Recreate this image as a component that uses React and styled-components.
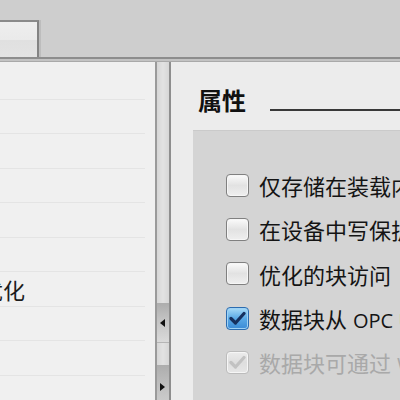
import React from "react";
import styled, { createGlobalStyle } from "styled-components";

const GlobalStyle = createGlobalStyle`
  html, body {
    margin: 0;
    padding: 0;
    width: 400px;
    height: 400px;
    overflow: hidden;
    background: #cecece;
  }
  * {
    box-sizing: border-box;
  }
`;

const Window = styled.div`
  width: 400px;
  height: 400px;
  display: flex;
  flex-direction: column;
  overflow: hidden;
  font-family: "Noto Sans CJK SC", "Noto Sans", sans-serif;
`;

const TabBar = styled.div`
  height: 57px;
  flex: none;
  background: #cecece;
  padding-top: 20px;
  display: flex;
`;

const Tab = styled.div`
  width: 39px;
  height: 37px;
  border-right: 2px solid #838383;
  border-top: 2px solid #8a8a8a;
  box-shadow: 2px 0 0 #bdbdbd;
  background: linear-gradient(#eeeeee 0, #eaeaea 50%, #e0e0e0 52%, #e3e3e3 100%);
`;

const Divider = styled.div`
  height: 5px;
  flex: none;
  border-top: 2px solid #8d8d8d;
  background: #c3c3c3;
  border-bottom: 1px solid #a9a9a9;
`;

const Body = styled.div`
  flex: 1;
  display: flex;
  min-height: 0;
`;

const TreePanel = styled.div`
  width: 155px;
  flex: none;
  background: #f0f0f0;
  padding: 3px 10px 0 0;
  overflow: hidden;
`;

const TreeRow = styled.div`
  height: 34.5px;
  border-bottom: 1px solid #e4e4e4;
  display: flex;
  align-items: center;
  font-size: 22px;
  color: #1c1c1c;
  white-space: nowrap;
`;

const TreeLabel = styled.span`
  margin-left: ${(p) => p.$offset}px;
  line-height: 1;
`;

const Splitter = styled.div`
  width: 16px;
  flex: none;
  display: flex;
  flex-direction: column;
  border-left: 2px solid #9a9a9a;
  border-right: 2px solid #8e8e8e;
  background: #d9d9d9;
`;

const Track = styled.div`
  height: ${(p) => p.$h}px;
  flex: none;
  background: linear-gradient(90deg, #d6d6d6, #e2e2e2 50%, #d6d6d6);
`;

const ArrowButton = styled.div`
  height: ${(p) => p.$h}px;
  flex: none;
  display: flex;
  align-items: ${(p) => (p.$top ? "flex-start" : "center")};
  justify-content: center;
  padding: ${(p) => (p.$top ? "18px 2px 0 0" : "0 2px 0 0")};
  background: linear-gradient(#adadad, #c4c4c4 45%, #dadada 100%);
  border-bottom: 1px solid #b5b5b5;
`;

const PropsPanel = styled.div`
  flex: 1;
  background: #ececec;
  padding: 26px 0 0 22px;
  overflow: hidden;
  display: flex;
  flex-direction: column;
`;

const Header = styled.div`
  display: flex;
  align-items: flex-end;
  gap: 24px;
  padding-left: 5px;
`;

const Title = styled.h2`
  margin: 0;
  font-size: 24px;
  line-height: 24px;
  font-weight: 700;
  color: #111;
`;

const Rule = styled.div`
  flex: 1;
  height: 2px;
  margin-bottom: 1px;
  background: #383838;
`;

const Group = styled.div`
  margin-top: 18px;
  flex: 1;
  background: #d4d4d4;
  border-top: 1px solid #cacaca;
  padding: 32px 0 0 33px;
  overflow: hidden;
`;

const OptionRow = styled.div`
  height: 44.3px;
  display: flex;
  align-items: center;
  gap: 10px;
  white-space: nowrap;
  font-size: 22px;
  color: ${(p) => (p.$disabled ? "#a9a9a9" : "#141414")};
`;

const Box = styled.span`
  width: 23px;
  height: 23px;
  flex: none;
  border-radius: 4px;
  display: flex;
  align-items: center;
  justify-content: center;
  border: 1px solid ${(p) => (p.$checked && !p.$disabled ? "#2c6cb0" : p.$disabled ? "#bcbcbc" : "#808080")};
  box-shadow: inset 0 0 0 1px ${(p) => (p.$checked && !p.$disabled ? "#9fd2f4" : "#f6f6f6")};
  background: ${(p) =>
    p.$checked && !p.$disabled
      ? "linear-gradient(#a9dcf8, #5aa9e6 50%, #3a8ad6 100%)"
      : p.$disabled
      ? "linear-gradient(#ececec, #dedede 50%, #e6e6e6)"
      : "linear-gradient(#fbfbfb, #e2e2e2 50%, #efefef)"};
`;

const Latin = styled.span`
  font-family: "Open Sans", "Noto Sans", sans-serif;
  font-size: 20px;
  margin-left: 6px;
`;

function Check({ color }) {
  return (
    <svg width="17" height="15" viewBox="0 0 17 15">
      <path d="M2 7.5 L6.5 12 L15 2.5" fill="none" stroke={color} strokeWidth="3.2" strokeLinecap="round" strokeLinejoin="round" />
    </svg>
  );
}

function Option({ checked, disabled, children }) {
  return (
    <OptionRow $disabled={disabled}>
      <Box $checked={checked} $disabled={disabled}>
        {checked && <Check color={disabled ? "#c2c2c2" : "#16305e"} />}
      </Box>
      <span>{children}</span>
    </OptionRow>
  );
}

const treeRows = ["", "", "", "", "", "", "优化", "", "", ""];

export default function App() {
  return (
    <Window>
      <GlobalStyle />
      <TabBar>
        <Tab />
      </TabBar>
      <Divider />
      <Body>
        <TreePanel>
          {treeRows.map((label, i) => (
            <TreeRow key={i}>
              {label && <TreeLabel $offset={-19}>{label}</TreeLabel>}
            </TreeRow>
          ))}
        </TreePanel>
        <Splitter>
          <Track $h={241} />
          <ArrowButton $h={40}>
            <svg width="5" height="8" viewBox="0 0 5 8">
              <path d="M5 0 L0 4 L5 8 Z" fill="#111" />
            </svg>
          </ArrowButton>
          <Track $h={22} />
          <ArrowButton $h={60} $top>
            <svg width="5" height="8" viewBox="0 0 5 8">
              <path d="M0 0 L5 4 L0 8 Z" fill="#111" />
            </svg>
          </ArrowButton>
        </Splitter>
        <PropsPanel>
          <Header>
            <Title>属性</Title>
            <Rule />
          </Header>
          <Group>
            <Option>仅存储在装载内存中</Option>
            <Option>在设备中写保护数据块</Option>
            <Option>优化的块访问</Option>
            <Option checked>
              数据块从<Latin>OPC UA</Latin> 可访问
            </Option>
            <Option checked disabled>
              数据块可通过<Latin>Web</Latin> 服务器访问
            </Option>
          </Group>
        </PropsPanel>
      </Body>
    </Window>
  );
}
